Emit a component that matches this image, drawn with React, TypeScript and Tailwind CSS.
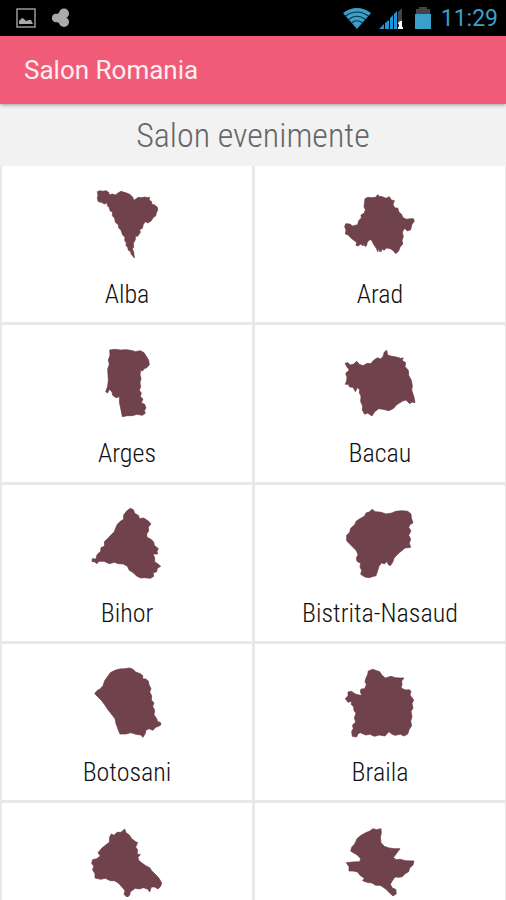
type County = {
  name: string
  caption?: boolean
  viewBox: string
  path: string
}

const counties: County[] = [
  {
    name: "Alba",
    viewBox: "33 39 216 216",
    path: "M52 50L60 47L68 49L78 47L86 52L88 60L97 57L106 60L114 54L123 49L132 52L140 54L149 58L158 66L161 76L168 72L175 67L185 68L194 66L203 68L209 67L207 75L214 79L216 88L224 90L232 97L233 106L229 113L227 123L220 127L214 137L204 144L196 140L190 148L187 160L179 164L181 172L173 184L166 183L166 194L160 205L161 216L157 222L161 230L163 249L154 238L151 229L145 226L143 216L138 212L139 204L134 196L135 187L128 180L123 166L116 158L115 149L106 142L104 130L97 122L98 112L90 107L88 98L82 92L82 83L74 87L64 82L55 80L52 70L54 61Z",
  },
  {
    name: "Arad",
    viewBox: "42 39 216 216",
    path: "M105 71L114 67L125 68L137 67L143 59L148 64L157 65L168 70L178 65L184 75L193 77L189 89L195 99L203 99L207 112L214 117L219 128L230 133L241 131L250 131L253 138L246 148L242 164L232 168L224 160L217 171L220 185L216 195L218 208L210 216L206 228L197 236L190 227L181 221L170 219L162 226L155 221L154 229L149 230L147 220L143 230L139 220L132 210L125 196L119 194L112 202L109 213L105 214L102 208L98 213L92 207L84 213L78 211L80 202L70 195L62 188L55 180L46 177L48 165L44 155L47 146L59 147L68 153L83 149L86 137L94 129L93 120L103 114L106 104L102 95Z",
  },
  {
    name: "Arges",
    viewBox: "33 37 216 216",
    path: "M89 46L104 44L121 46L140 45L158 48L166 51L181 48L192 54L199 65L206 77L208 91L200 99L191 103L188 109L182 107L180 120L183 132L180 144L182 156L178 167L184 175L181 186L189 193L184 204L194 209L198 220L193 228L196 236L187 242L171 239L157 243L142 243L127 246L124 231L121 216L118 202L119 186L108 189L98 182L96 172L88 164L83 175L77 171L83 155L85 136L84 120L83 103L88 89L85 76L90 62Z",
  },
  {
    name: "Bacau",
    viewBox: "42 37 216 216",
    path: "M45 86L54 84L61 91L70 89L80 80L88 89L99 93L112 86L122 87L132 76L143 69L151 73L159 66L163 52L170 47L173 61L185 65L199 67L211 71L220 70L216 77L227 84L225 96L235 107L236 122L244 137L247 154L245 166L252 188L255 204L246 202L239 207L228 196L218 199L207 206L199 211L191 221L177 228L159 224L146 222L134 231L126 244L113 235L104 239L97 226L98 214L92 201L93 184L88 175L89 165L82 159L76 171L69 158L59 157L55 149L46 149L50 138L51 128L47 116L58 106L51 97Z",
  },
  {
    name: "Bihor",
    viewBox: "33 35 216 216",
    path: "M151 39L160 43L164 54L176 61L178 70L191 68L205 77L213 86L205 95L206 107L200 116L201 126L212 131L221 140L223 150L235 160L231 168L233 176L219 176L224 188L224 199L234 206L242 213L232 219L230 229L219 233L221 243L211 249L194 247L182 248L170 242L158 231L148 225L142 213L130 206L115 205L103 201L88 205L72 198L58 198L50 205L43 199L36 199L37 190L48 191L51 178L62 168L63 157L74 152L73 139L84 129L90 122L103 109L107 98L112 87L121 78L131 72L131 59L140 47Z",
  },
  {
    name: "Bistrita-Nasaud",
    viewBox: "42 35 216 216",
    path: "M79 77L92 69L104 62L108 53L118 50L126 42L136 49L154 51L168 56L186 53L197 48L216 46L233 48L243 56L244 68L249 83L241 87L236 96L243 107L236 120L242 131L238 144L242 156L225 158L208 172L200 180L192 189L188 201L181 211L174 207L172 198L164 205L154 203L147 213L143 226L138 241L127 244L117 247L105 245L92 237L95 225L90 215L92 204L81 198L79 188L84 178L79 166L69 156L57 144L50 136L50 120L59 111L62 99L74 88Z",
  },
  {
    name: "Botosani",
    viewBox: "33 32 216 216",
    path: "M91 52L105 45L119 41L134 40L149 38L159 42L167 50L181 55L189 62L187 70L197 71L205 77L207 88L213 100L209 110L215 121L214 134L222 143L218 153L224 165L222 178L230 190L233 199L241 201L243 208L236 213L227 216L219 225L207 220L198 224L196 234L189 246L182 239L168 237L152 232L138 236L120 236L115 224L108 205L105 190L98 181L83 162L73 147L63 134L53 124L44 115L51 106L61 100L69 91L74 76Z",
  },
  {
    name: "Braila",
    viewBox: "42 32 216 216",
    path: "M115 47L128 42L140 46L149 49L156 60L166 68L183 63L196 67L210 68L222 68L215 77L216 88L213 98L227 104L238 103L243 108L240 119L251 134L246 145L249 158L243 168L246 184L242 197L245 211L238 222L233 236L222 242L211 237L195 240L185 236L177 229L171 235L165 242L148 239L133 243L120 237L107 239L91 232L84 235L80 245L67 243L65 229L70 219L67 210L77 200L73 187L78 174L72 166L71 154L64 148L64 138L54 141L46 130L54 121L54 110L64 108L76 116L87 119L96 120L91 110L93 101L104 100L109 88L105 78L109 66L113 57Z",
  },
  {
    name: "Brasov",
    caption: false,
    viewBox: "33 105 216 216",
    path: "M89 141L94 132L102 136L111 127L123 127L134 117L138 128L148 135L154 145L165 154L173 158L167 171L173 180L171 191L181 194L174 202L176 211L187 220L197 227L209 233L215 242L228 255L237 265L245 279L242 289L234 297L224 291L214 291L209 306L204 298L191 293L177 297L166 295L151 305L149 315L142 322L132 313L135 302L126 291L114 278L103 272L91 272L76 265L62 268L45 264L45 251L38 240L41 229L35 220L38 209L50 206L61 198L54 188L66 174L78 164L88 157Z",
  },
  {
    name: "Buzau",
    caption: false,
    viewBox: "42 105 216 216",
    path: "M81 146L93 136L107 128L118 124L129 116L140 119L153 116L154 130L151 141L153 158L163 169L177 174L194 176L210 176L202 187L190 203L199 209L211 208L226 212L252 213L249 225L239 234L236 245L225 251L217 260L206 262L195 261L186 274L181 283L187 294L197 298L199 311L189 318L179 309L168 298L159 291L150 286L137 286L126 279L111 277L98 272L103 265L90 256L83 246L69 243L57 243L57 230L49 218L68 216L89 215L92 206L83 196L71 189L62 183L66 170L74 162Z",
  },
]

const StatusBar = () => {
  return (
    <div className="flex h-9 shrink-0 items-center justify-between bg-black pl-4 pr-2">
      <div className="flex items-center gap-4">
        <svg className="h-5 w-5" viewBox="0 0 20 20" aria-hidden="true">
          <rect x="1" y="1" width="18" height="18" fill="none" stroke="#999" strokeWidth="1.5" />
          <path d="M3 16V13L6 10L8 11L10 13L13 12L15 12L17 16Z" fill="#aaa" />
        </svg>
        <svg className="h-5 w-5" viewBox="0 0 20 20" aria-hidden="true">
          <path d="M5 10L12 6M5 10L12 14" stroke="#aaa" strokeWidth="7" />
          <circle cx="4" cy="10" r="4.2" fill="#aaa" />
          <circle cx="12" cy="5.5" r="5" fill="#aaa" />
          <circle cx="12" cy="14" r="5" fill="#aaa" />
        </svg>
      </div>
      <div className="flex items-center">
        <svg className="mr-2 h-6 w-7" viewBox="0 0 28 24" aria-hidden="true">
          <path d="M14 23L0 7Q14 -3 28 7Z" fill="#3b9fc9" />
          <path d="M2.5 10Q14 2 25.5 10M5.5 13.5Q14 7 22.5 13.5M8.5 17Q14 12.500 19.5 17" fill="none" stroke="#0c3142" strokeWidth="1.2" />
        </svg>
        <svg className="mr-3 h-6 w-6" viewBox="0 0 24 24" aria-hidden="true">
          <path d="M19 6L23 2V22H19Z" fill="#444" />
          <path d="M0 23L5 18V23ZM6 23V17L10 14V23ZM11 23V12L14 9V23ZM15 23V8L18 5V23Z" fill="#1c97dc" />
          <path d="M19 17L21 15H23V21H24V23H19V21H20V18H19Z" fill="#fff" />
        </svg>
        <svg className="mr-2.5 h-6 w-4" viewBox="0 0 16 24" aria-hidden="true">
          <path d="M1 3H4V1H12V3H15V9H1Z" fill="#444" />
          <path d="M0 8H16V23H0Z" fill="#3b9fc9" />
        </svg>
        <span className="pt-0.5 text-[23px] leading-8 text-[#3b9fc9]">11:29</span>
      </div>
    </div>
  )
}

const CountyCard = ({ county }: { county: County }) => {
  return (
    <button
      type="button"
      aria-label={county.name}
      className="flex aspect-[8/5] flex-col items-center bg-white pt-[22px]"
    >
      <svg className="h-18 w-18 shrink-0" viewBox={county.viewBox} aria-hidden="true">
        <path d={county.path} fill="#70434c" stroke="#6b3343" strokeWidth="2" strokeLinejoin="round" />
      </svg>
      {county.caption !== false && (
        <span className="mt-[18px] font-['Roboto_Condensed',Roboto,sans-serif] text-[26px] font-light leading-8 text-[#111]">
          {county.name}
        </span>
      )}
    </button>
  )
}

export default function App() {
  return (
    <div className="flex h-screen flex-col bg-[#f2f2f2] font-[Roboto,sans-serif]">
      <StatusBar />
      <header className="z-10 flex h-17 shrink-0 items-center bg-[#f05c78] px-6 shadow-[0_1px_4px_rgba(0,0,0,0.35)]">
        <h1 className="text-[26px] leading-8 text-[#ffeef0]">Salon Romania</h1>
      </header>
      <main className="min-h-0 flex-1 overflow-y-auto [scrollbar-width:none]">
        <h2 className="py-3 text-center font-['Roboto_Condensed',Roboto,sans-serif] text-[34px] font-light leading-[38px] text-[#666]">
          Salon evenimente
        </h2>
        <div className="grid grid-cols-2 gap-[3px] bg-[#e8e8e8] pl-0.5 pr-px">
          {counties.map((county) => (
            <CountyCard key={county.name} county={county} />
          ))}
        </div>
      </main>
    </div>
  )
}
